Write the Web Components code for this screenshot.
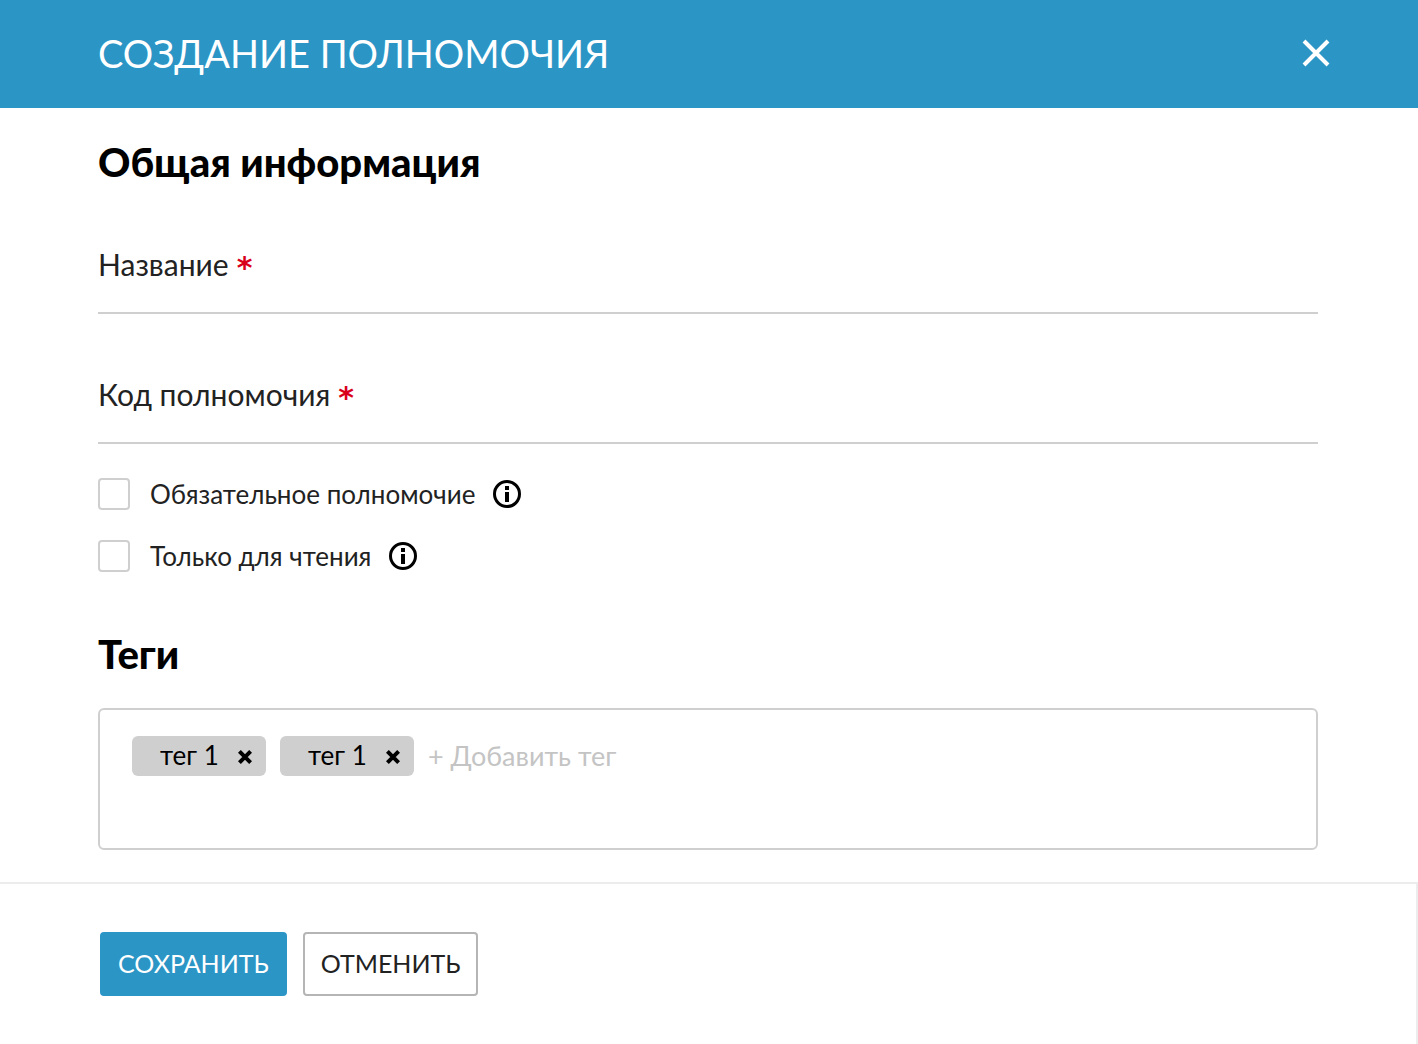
<!DOCTYPE html>
<html lang="ru">
<head>
<meta charset="utf-8">
<meta name="viewport" content="width=device-width, initial-scale=1">
<title>Создание полномочия</title>
<style>
  body { margin: 0; background: #fff; color: #222; font-family: Lato, "Open Sans", sans-serif; }
</style>
</head>
<body>
<permission-dialog>
  <span slot="title">СОЗДАНИЕ ПОЛНОМОЧИЯ</span>
  <form-section>
    <span slot="heading">Общая информация</span>
    <field-list>
      <text-field name="title">Название</text-field>
      <text-field name="code">Код полномочия</text-field>
    </field-list>
    <check-list>
      <check-field name="required" hint="Подсказка">Обязательное полномочие</check-field>
      <check-field name="readonly" hint="Подсказка">Только для чтения</check-field>
    </check-list>
  </form-section>
  <form-section>
    <span slot="heading">Теги</span>
    <tag-box placeholder="+ Добавить тег">
      <tag-chip>тег 1</tag-chip>
      <tag-chip>тег 1</tag-chip>
    </tag-box>
  </form-section>
  <action-button slot="actions" variant="primary">СОХРАНИТЬ</action-button>
  <action-button slot="actions">ОТМЕНИТЬ</action-button>
</permission-dialog>

<script>
const base = `
  *, *::before { box-sizing: border-box; }
  button, input { font: inherit; color: inherit; margin: 0; padding: 0; border: 0; background: none; }
  button { cursor: pointer; }
  svg { display: block; }
`;
function define(name, html, setup) {
  const template = document.createElement('template');
  template.innerHTML = `<style>${base}</style>${html}`;
  customElements.define(name, class extends HTMLElement {
    constructor() {
      super();
      this.attachShadow({ mode: 'open' }).append(template.content.cloneNode(true));
    }
    connectedCallback() { if (setup) setup(this, this.shadowRoot); }
  });
}

define('permission-dialog', `
  <style>
    :host { display: flex; flex-direction: column; min-height: 100vh; }
    header { display: flex; align-items: center; justify-content: space-between;
      padding: 26px 88px 28px 98px; background: #2b95c6; color: #fff; }
    h1 { margin: 0; font-size: 38px; line-height: 54px; font-weight: 400; }
    main { display: flex; flex-direction: column; gap: 58px; flex: 1; padding: 30px 100px 32px 98px; }
    footer { display: flex; gap: 16px; padding: 48px 100px;
      border-top: 2px solid #ececec; border-right: 2px solid #ececec; }
  </style>
  <header>
    <h1><slot name="title"></slot></h1>
    <button type="button" aria-label="Закрыть">
      <svg width="28" height="28" viewBox="0 0 28 28" fill="none" stroke="#fff" stroke-width="4"><path d="M2 2 26 26M26 2 2 26"/></svg>
    </button>
  </header>
  <main><slot></slot></main>
  <footer><slot name="actions"></slot></footer>
`);

define('form-section', `
  <style>
    :host { display: block; }
    h2 { margin: 0 0 30px; font-size: 40px; line-height: 48px; font-weight: 900; color: #000; }
  </style>
  <h2><slot name="heading"></slot></h2>
  <slot></slot>
`);

define('field-list', `
  <style>:host { display: flex; flex-direction: column; gap: 60px; padding: 28px 0 34px; }</style>
  <slot></slot>
`);

define('text-field', `
  <style>
    :host { display: block; }
    label { display: flex; align-items: flex-end; gap: 8px; font-size: 30px; line-height: 40px; }
    .star { color: #d9001b; font: 700 30px/32px "DejaVu Sans", sans-serif; }
    input { display: block; width: 100%; height: 30px; border-bottom: 2px solid #cfcfcf; font-size: 26px; outline: none; }
  </style>
  <label for="control"><slot></slot><span class="star">*</span></label>
  <input id="control" type="text" required>
`, (host, root) => { root.querySelector('input').name = host.getAttribute('name'); });

define('check-list', `
  <style>:host { display: flex; flex-direction: column; gap: 30px; }</style>
  <slot></slot>
`);

define('check-field', `
  <style>
    :host { display: flex; align-items: center; gap: 18px; font-size: 26px; line-height: 32px; }
    label { display: flex; align-items: center; gap: 20px; }
    input { appearance: none; width: 32px; height: 32px; border: 2px solid #cfcfcf; border-radius: 4px; background: #fff; }
    input:checked { background: #2b95c6; border-color: #2b95c6; }
  </style>
  <label><input type="checkbox"><slot></slot></label>
  <button type="button">
    <svg width="28" height="28" viewBox="0 0 28 28"><circle cx="14" cy="14" r="12.5" fill="none" stroke="#000" stroke-width="3"/><path d="M12 6h4v4h-4zM12 12h4v10h-4z"/></svg>
  </button>
`, (host, root) => {
  root.querySelector('input').name = host.getAttribute('name');
  root.querySelector('button').setAttribute('aria-label', host.getAttribute('hint'));
});

define('tag-box', `
  <style>
    :host { display: flex; flex-wrap: wrap; align-items: flex-start; align-content: flex-start; gap: 14px;
      box-sizing: border-box; min-height: 142px; padding: 26px 32px; border: 2px solid #cfcfcf; border-radius: 6px; }
    input { flex: 1; min-width: 200px; height: 38px; font-size: 27px; outline: none; }
    input::placeholder { color: #c4c4c4; opacity: 1; }
  </style>
  <slot></slot>
  <input type="text">
`, (host, root) => {
  const input = root.querySelector('input');
  input.placeholder = host.getAttribute('placeholder');
  input.setAttribute('aria-label', host.getAttribute('placeholder'));
});

define('tag-chip', `
  <style>
    :host { display: flex; align-items: flex-start; justify-content: space-between; box-sizing: border-box; min-width: 134px; height: 40px;
      padding: 0 14px 0 28px; border-radius: 6px; background: #cfcfcf; color: #000; font-size: 26px; line-height: 38px; }
    button { padding-top: 14px; }
  </style>
  <span><slot></slot></span>
  <button type="button" aria-label="Удалить тег">
    <svg width="14" height="14" viewBox="0 0 14 14" fill="none" stroke="#000" stroke-width="4"><path d="M1.4 1.4 12.6 12.6M12.6 1.4 1.4 12.6"/></svg>
  </button>
`);

define('action-button', `
  <style>
    :host { display: block; }
    button { height: 64px; padding: 0 16px 2px; border: 2px solid #b5b5b5; border-radius: 4px; background: #fff; font-size: 25px; line-height: 32px; }
    :host([variant="primary"]) button { border-color: #2b95c6; background: #2b95c6; color: #fff; }
  </style>
  <button type="button"><slot></slot></button>
`);
</script>
</body>
</html>
